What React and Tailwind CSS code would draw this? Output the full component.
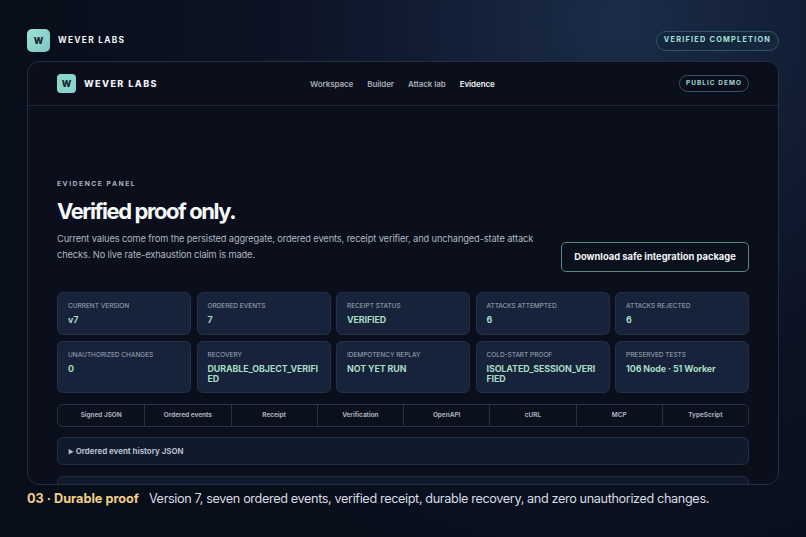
const row1 = [
  ["CURRENT VERSION", "v7"],
  ["ORDERED EVENTS", "7"],
  ["RECEIPT STATUS", "VERIFIED"],
  ["ATTACKS ATTEMPTED", "6"],
  ["ATTACKS REJECTED", "6"],
];
const row2 = [
  ["UNAUTHORIZED CHANGES", "0"],
  ["RECOVERY", "DURABLE_OBJECT_VERIFIED"],
  ["IDEMPOTENCY REPLAY", "NOT YET RUN"],
  ["COLD-START PROOF", "ISOLATED_SESSION_VERIFIED"],
  ["PRESERVED TESTS", "106 Node · 51 Worker"],
];
const tabs = ["Signed JSON", "Ordered events", "Receipt", "Verification", "OpenAPI", "cURL", "MCP", "TypeScript"];
const nav = ["Workspace", "Builder", "Attack lab"];

function Card({ label, value }) {
  return (
    <div className="min-h-[43px] rounded-[6px] border border-[#233047] bg-[#17233a] pt-[8px] pr-[9px] pb-[8px] pl-[10px]">
      <div className="text-[6.5px] leading-[10px] whitespace-nowrap text-[#a3aebd]">{label}</div>
      <div className="mt-[4px] text-[8.9px] leading-[10px] font-bold tracking-[-0.01em] break-all text-[#a9dcc6]">{value}</div>
    </div>
  );
}

export default function App() {
  return (
    <div className="relative flex h-[537px] w-[806px] flex-col overflow-hidden bg-[radial-gradient(circle_at_620px_20px,#1c2d48_0%,#14213a_17%,#0c1324_42%,#090e1b_72%)] px-[27px] pt-[29px] font-['Inter',sans-serif]">
      <header className="flex h-[23px] items-center justify-between">
        <div className="flex items-center gap-[8px]">
          <div className="flex h-[23px] w-[23px] items-center justify-center rounded-[5px] bg-gradient-to-br from-[#a0e3db] to-[#7cc5be] text-[9px] font-extrabold text-[#10202b]">W</div>
          <span className="text-[8.4px] font-bold tracking-[0.15em] text-[#f2f4f7]">WEVER LABS</span>
        </div>
        <div className="flex h-[20px] w-[123px] items-center justify-center rounded-full border border-[#35506a] bg-[#14263c] text-[7.3px] font-bold tracking-[0.17em] whitespace-nowrap text-[#a8e0de]">VERIFIED COMPLETION</div>
      </header>

      <main className="mt-[9px] h-[424px] w-[752px] overflow-hidden rounded-[12px] border border-[#222e42] bg-[#0a0f1b]">
        <div className="flex h-[44px] items-center border-b border-[#1e2838] px-[29px]">
          <div className="flex w-[253px] items-center gap-[8px]">
            <div className="flex h-[19px] w-[19px] items-center justify-center rounded-[4px] bg-[#8bd4cc] text-[9px] font-extrabold text-[#10202b]">W</div>
            <span className="text-[9.1px] font-extrabold tracking-[0.155em] whitespace-nowrap text-[#eef1f5]">WEVER LABS</span>
          </div>
          <nav className="flex items-center gap-[14px] text-[8px] font-semibold tracking-[-0.01em] whitespace-nowrap text-[#a7acb7]">
            {nav.map((n) => <span key={n}>{n}</span>)}
            <span className="text-[#eff2f6]">Evidence</span>
          </nav>
          <div className="ml-auto flex h-[17px] w-[70px] items-center justify-center rounded-full border border-[#3a5365] text-[6.4px] font-bold tracking-[0.17em] whitespace-nowrap text-[#a3d7d4]">PUBLIC DEMO</div>
        </div>

        <section className="px-[29px] pt-[73px]">
          <div className="text-[6.8px] leading-[9px] font-bold tracking-[0.22em] text-[#aab3c0]">EVIDENCE PANEL</div>
          <h1 className="mt-[5px] text-[22px] leading-[36px] font-bold tracking-[-0.065em] text-[#f7f8fa]">Verified proof only.</h1>
          <div className="mt-[2px] flex items-end justify-between">
            <p className="w-[490px] text-[9.25px] leading-[16px] tracking-[-0.012em] text-[#b0b8c4]">Current values come from the persisted aggregate, ordered events, receipt verifier, and unchanged-state attack checks. No live rate-exhaustion claim is made.</p>
            <button className="mb-[-9px] h-[30px] w-[188px] rounded-[5px] border border-[#5d8489] bg-[#0a101c] text-[9.4px] font-bold whitespace-nowrap text-[#f2f4f7]">Download safe integration package</button>
          </div>

          <div className="mt-[29px] grid grid-cols-5 gap-x-[5.5px] gap-y-[6px]">
            {row1.map(([l, v]) => <Card key={l} label={l} value={v} />)}
            {row2.map(([l, v]) => <Card key={l} label={l} value={v} />)}
          </div>

          <div className="mt-[11px] grid h-[23px] grid-cols-8 rounded-[6px] border border-[#263246] bg-[#0a101c]">
            {tabs.map((t, i) => (
              <div key={t} className={`flex items-center justify-center text-[6.4px] font-bold whitespace-nowrap text-[#a7b0bc] ${i > 0 ? "border-l border-[#263246]" : ""}`}>{t}</div>
            ))}
          </div>

          <div className="mt-[10px] flex h-[28px] items-center rounded-[6px] border border-[#222e42] bg-[#101a2c] px-[10px] pt-[1px] text-[7.9px] font-bold whitespace-nowrap text-[#b6bec9]">
            <span className="mr-[2px] text-[6px]">▶</span>Ordered event history JSON
          </div>
          <div className="mt-[11px] h-[28px] rounded-[6px] border border-[#222e42] bg-[#101a2c]" />
        </section>
      </main>

      <footer className="mt-[5px] flex items-center gap-[10px] text-[12.7px] leading-[18px] whitespace-nowrap">
        <span className="font-bold text-[#f3d088]">03 · Durable proof</span>
        <span className="tracking-[-0.03em] text-[#d7dce3]">Version 7, seven ordered events, verified receipt, durable recovery, and zero unauthorized changes.</span>
      </footer>
    </div>
  );
}
